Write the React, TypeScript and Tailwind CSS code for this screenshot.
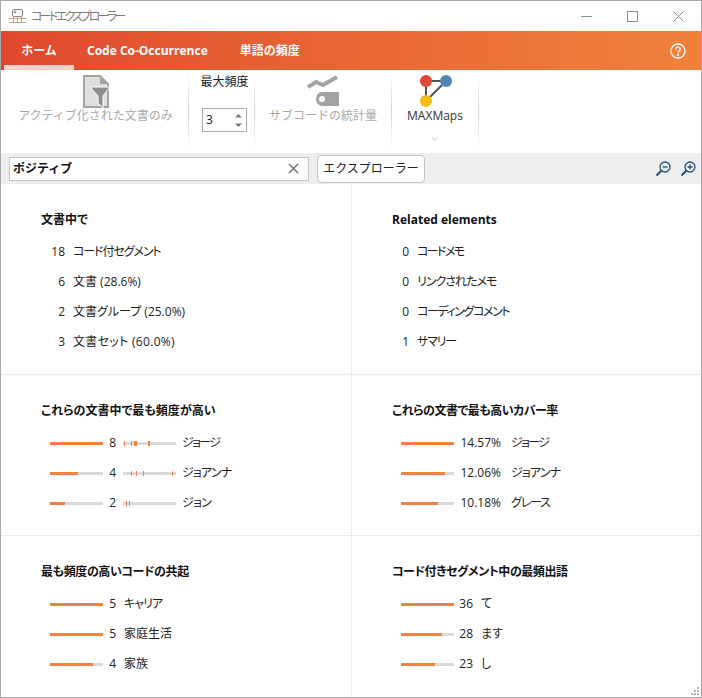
import { ChevronDown, X } from "lucide-react";

type BarRow = { fill: number; value: string; label: string; track?: string; ticks?: [number, number][] };

const hits: BarRow[] = [
  { fill: 100, value: "8", label: "ジョージ", track: "tracking-[-1.7px]", ticks: [[1, 1], [8, 1], [11, 3], [25, 2]] },
  { fill: 53, value: "4", label: "ジョアンナ", track: "tracking-[-0.8px]", ticks: [[8, 1], [13, 1], [20, 1], [49, 1]] },
  { fill: 28, value: "2", label: "ジョン", track: "tracking-[-0.7px]", ticks: [[3, 1], [6, 1]] },
];
const coverage: BarRow[] = [
  { fill: 100, value: "14.57%", label: "ジョージ", track: "tracking-[-1.7px]" },
  { fill: 83, value: "12.06%", label: "ジョアンナ", track: "tracking-[-0.8px]" },
  { fill: 70, value: "10.18%", label: "グレース", track: "tracking-[-1.2px]" },
];
const cooc: BarRow[] = [
  { fill: 100, value: "5", label: "キャリア", track: "tracking-[-1px]" },
  { fill: 100, value: "5", label: "家庭生活" },
  { fill: 81, value: "4", label: "家族" },
];
const words: BarRow[] = [
  { fill: 100, value: "36", label: "て" },
  { fill: 77, value: "28", label: "ます" },
  { fill: 64, value: "23", label: "し" },
];

function Bar({ fill, ticks }: { fill: number; ticks?: [number, number][] }) {
  return (
    <div className="relative h-[3px] w-[53px] shrink-0 bg-[#d9d9d9]">
      {ticks ? (
        ticks.map(([left, width]) => (
          <div key={left} className="absolute -top-[1px] h-[5px] bg-[#f4823f]" style={{ left, width }} />
        ))
      ) : (
        <div className="h-full bg-[#f4823f]" style={{ width: `${fill}%` }} />
      )}
    </div>
  );
}

function CountRow({ n, label, numWidth = "w-[24px]", track = "" }: { n: string; label: string; numWidth?: string; track?: string }) {
  return (
    <div className="flex h-[30px] items-center">
      <span className={`${numWidth} text-right`}>{n}</span>
      <span className={`ml-2 [font-feature-settings:"palt"] ${track}`}>{label}</span>
    </div>
  );
}

function Card({ title, children, track = "" }: { title: string; children: React.ReactNode; track?: string }) {
  return (
    <div className="pt-[27px] pl-[40px]">
      <h3 className={`mb-[8px] h-[18px] text-[12px] leading-[18px] font-bold text-[#111] [font-feature-settings:"palt"] ${track}`}>
        {title}
      </h3>
      {children}
    </div>
  );
}

function BarList({ rows, numWidth, gap }: { rows: BarRow[]; numWidth: string; gap: string }) {
  return (
    <div className="ml-[9px]">
      {rows.map((r) => (
        <div key={r.label} className="flex h-[30px] items-center">
          <Bar fill={r.fill} />
          <span className={`${numWidth} shrink-0 text-right`}>{r.value}</span>
          {r.ticks && (
            <span className="ml-[7px]">
              <Bar fill={0} ticks={r.ticks} />
            </span>
          )}
          <span className={`${gap} [font-feature-settings:"palt"] ${r.track ?? ""}`}>{r.label}</span>
        </div>
      ))}
    </div>
  );
}

function RibbonDivider() {
  return <div className="my-[2px] w-px shrink-0 bg-gradient-to-b from-white via-[#d4d4d4] to-white" />;
}

export default function App() {
  return (
    <div
      className="flex h-[698px] w-[702px] flex-col overflow-hidden border border-[#a9a9a9] bg-white text-[12px] text-[#222]"
      style={{ fontFamily: '"Open Sans", "Noto Sans CJK JP", sans-serif' }}
    >
      {/* title bar */}
      <div className="flex h-[30px] shrink-0 items-center pl-[8px]">
        <svg width="17" height="16" viewBox="0 0 17 16" fill="none" stroke="#8a8a8a" strokeWidth="1">
          <rect x="3.5" y="1.5" width="10" height="7" rx="1.5" />
          <circle cx="6" cy="4" r="1" />
          <path d="M0 10.5h17M0 14.5h17" stroke="#c9a27e" />
          <path d="M4.5 9v6M8.5 9v6M12.5 9v6" stroke="#c9a27e" />
        </svg>
        <span className='ml-[5px] pt-[1px] text-[12px] tracking-[-2.7px] text-[#7c7c7c] [font-feature-settings:"palt"]'>
          コードエクスプローラー
        </span>
        <div className="mr-[17px] ml-auto flex items-center gap-[35px]">
          <svg width="11" height="11" viewBox="0 0 11 11" stroke="#8f8f8f" fill="none">
            <path d="M0 5.5h11" />
          </svg>
          <svg width="11" height="11" viewBox="0 0 11 11" stroke="#8f8f8f" fill="none">
            <rect x=".5" y=".5" width="10" height="10" />
          </svg>
          <svg width="11" height="11" viewBox="0 0 11 11" stroke="#8f8f8f" fill="none">
            <path d="M.5.5l10 10M10.5.5l-10 10" />
          </svg>
        </div>
      </div>

      {/* tabs */}
      <div className="flex h-[39px] shrink-0 items-stretch bg-gradient-to-r from-[#e0482f] to-[#f0813c] pl-[3px] font-bold text-white">
        <div className="flex w-[70px] items-center justify-center border-b-[5px] border-[#f8d2ca] pt-[5px]">ホーム</div>
        <div className="ml-[13px] flex items-center">Code Co-Occurrence</div>
        <div className="ml-[32px] flex items-center">単語の頻度</div>
        <div className="mr-[15px] ml-auto flex items-center">
          <svg width="16" height="16" viewBox="0 0 16 16" fill="none" stroke="white" strokeWidth="1.3">
            <circle cx="8" cy="8" r="7" />
            <path d="M5.8 6.2a2.2 2.2 0 1 1 3.4 1.8c-.8.5-1.2.9-1.2 1.8" strokeLinecap="round" />
            <circle cx="8" cy="12" r=".5" fill="white" />
          </svg>
        </div>
      </div>

      {/* ribbon */}
      <div className="flex h-[83px] shrink-0 items-stretch">
        <div className="flex w-[187px] flex-col items-center pt-[5px] pl-[2px] text-[#a9a9a9]">
          <svg width="27" height="33" viewBox="0 0 27 33" className="ml-[2px]">
            <path d="M1 1h16l8 8v23H1z" fill="#dedede" stroke="#a3a3a3" strokeWidth="2" />
            <path d="M17 1v8h8z" fill="#a3a3a3" />
            <path d="M7 12h20l-7 9v12l-5-5v-7z" fill="#8f8f8f" stroke="white" strokeWidth="1" />
          </svg>
          <span className="-mt-[1px] leading-[18px]">アクティブ化された文書のみ</span>
        </div>
        <RibbonDivider />
        <div className="flex w-[65px] flex-col items-center pt-[3px] pl-[6px]">
          <span className="leading-[18px]">最大頻度</span>
          <div className="mt-[17px] flex h-[24px] w-[45px] items-center justify-between border border-[#a9a9a9] pr-[4px] pl-[3px]">
            <span>3</span>
            <svg width="7" height="15" viewBox="0 0 7 15" fill="#777">
              <path d="M3.5 1L7 4.5H0zM3.5 14L0 10.5h7z" />
            </svg>
          </div>
        </div>
        <RibbonDivider />
        <div className="flex w-[136px] flex-col items-center pt-[5px] text-[#a9a9a9]">
          <svg width="32" height="33" viewBox="0 0 32 33">
            <path d="M1 12l8-5 7 3L30 2" fill="none" stroke="#a3a3a3" strokeWidth="4" />
            <path d="M15 17h17v14H15a6 7 0 0 1-6-7 6 7 0 0 1 6-7z" fill="#a3a3a3" />
            <circle cx="15" cy="24" r="3" fill="white" />
          </svg>
          <span className="-mt-[1px] leading-[18px]">サブコードの統計量</span>
        </div>
        <RibbonDivider />
        <div className="flex w-[86px] flex-col items-center pt-[4px]">
          <svg width="34" height="34" viewBox="0 0 34 34" fill="none" className="-mr-[1px]">
            <path d="M7 7h20M7 7v20M27 7L7 27" stroke="#555" strokeWidth="2" />
            <circle cx="7" cy="7" r="6" fill="#e04a33" />
            <circle cx="27" cy="7" r="6" fill="#4f86b5" />
            <circle cx="7" cy="27" r="6" fill="#f6bb16" />
          </svg>
          <span className="-mt-[1px] leading-[18px] text-[#333]">MAXMaps</span>
          <ChevronDown size={10} strokeWidth={1} className="mt-[9px] text-[#777]" />
        </div>
        <RibbonDivider />
      </div>

      {/* search bar */}
      <div className="flex h-[31px] shrink-0 items-center bg-[#eeeeee] pl-[8px]">
        <div className="flex h-[24px] w-[300px] items-center justify-between border border-[#c4c4c4] bg-white pr-[6px] pl-[3px] font-bold text-[#111]">
          <span>ポジティブ</span>
          <X size={17} strokeWidth={1.8} className="text-[#666]" />
        </div>
        <div className="ml-[8px] flex h-[28px] w-[108px] items-center justify-center rounded-[4px] border border-[#c4c4c4] bg-white">
          エクスプローラー
        </div>
        <div className="mr-[5px] ml-auto flex items-center gap-[9px]">
          <svg width="16" height="16" viewBox="0 0 16 16" fill="none" stroke="#23527c" strokeWidth="1.3">
            <circle cx="10" cy="6" r="5" />
            <path d="M7.5 6h5" />
            <path d="M6.5 9.5L1.5 14.5" strokeWidth="2.2" />
          </svg>
          <svg width="16" height="16" viewBox="0 0 16 16" fill="none" stroke="#23527c" strokeWidth="1.3">
            <circle cx="10" cy="6" r="5" />
            <path d="M7.5 6h5M10 3.5v5" />
            <path d="M6.5 9.5L1.5 14.5" strokeWidth="2.2" />
          </svg>
        </div>
      </div>

      {/* content */}
      <div className="relative grid flex-1 grid-cols-[351px_1fr] grid-rows-[191px_161px_1fr]">
        <div className="border-r border-b border-[#ebebeb]">
          <Card title="文書中で">
            <CountRow n="18" label="コード付セグメント" track="tracking-[-1.1px]" />
            <CountRow n="6" label="文書 (28.6%)" />
            <CountRow n="2" label="文書グループ (25.0%)" />
            <CountRow n="3" label="文書セット (60.0%)" track="tracking-[0.3px]" />
          </Card>
        </div>
        <div className="border-b border-[#ebebeb]">
          <Card title="Related elements">
            <CountRow n="0" label="コードメモ" numWidth="w-[17px]" track="tracking-[-1.6px]" />
            <CountRow n="0" label="リンクされたメモ" numWidth="w-[17px]" track="tracking-[-1px]" />
            <CountRow n="0" label="コーディングコメント" numWidth="w-[17px]" track="tracking-[-1.4px]" />
            <CountRow n="1" label="サマリー" numWidth="w-[17px]" track="tracking-[-1.2px]" />
          </Card>
        </div>
        <div className="border-r border-b border-[#ebebeb]">
          <Card title="これらの文書中で最も頻度が高い">
            <BarList rows={hits} numWidth="w-[13px]" gap="ml-[6px]" />
          </Card>
        </div>
        <div className="border-b border-[#ebebeb]">
          <Card title="これらの文書で最も高いカバー率" track="tracking-[-0.5px]">
            <BarList rows={coverage} numWidth="w-[47px]" gap="ml-[10px]" />
          </Card>
        </div>
        <div className="border-r border-[#ebebeb]">
          <Card title="最も頻度の高いコードの共起" track="tracking-[-0.4px]">
            <BarList rows={cooc} numWidth="w-[13px]" gap="ml-[8px]" />
          </Card>
        </div>
        <div>
          <Card title="コード付きセグメント中の最頻出語" track="tracking-[-0.45px]">
            <BarList rows={words} numWidth="w-[19px]" gap="ml-[8px]" />
          </Card>
        </div>
        <svg className="absolute right-[1px] bottom-[1px]" width="10" height="10" viewBox="0 0 10 10" fill="#b5b5b5">
          <rect x="7" y="1" width="2" height="2" />
          <rect x="4" y="4" width="2" height="2" />
          <rect x="7" y="4" width="2" height="2" />
          <rect x="1" y="7" width="2" height="2" />
          <rect x="4" y="7" width="2" height="2" />
          <rect x="7" y="7" width="2" height="2" />
        </svg>
      </div>
    </div>
  );
}
